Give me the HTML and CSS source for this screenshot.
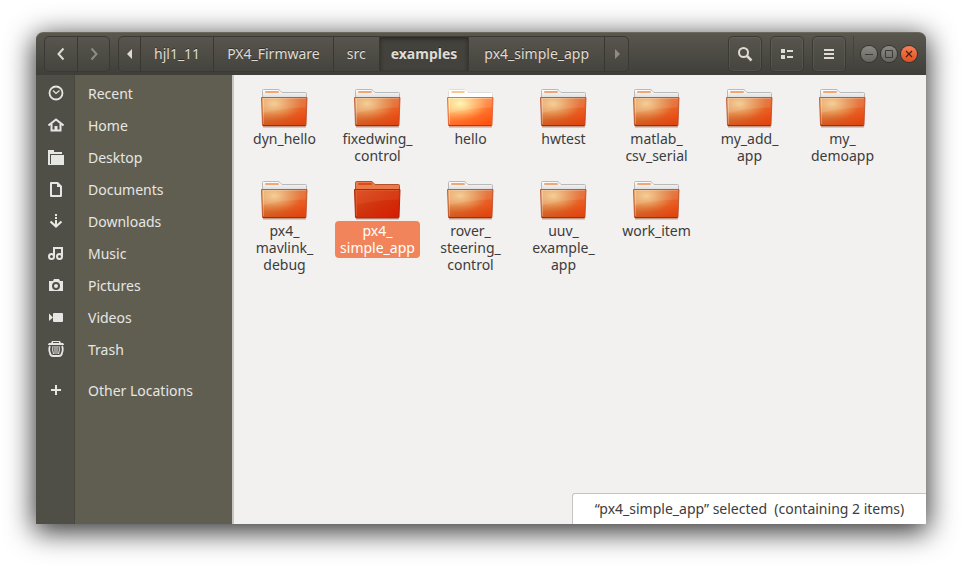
FILE: index.html
```html
<!DOCTYPE html>
<html lang="en">
<head>
    <meta charset="UTF-8">
    <meta name="viewport" content="width=device-width, initial-scale=1.0">
    <title>examples</title>
    <link rel="stylesheet" href="styles.css">
</head>
<body>
    <!-- shared folder drawing -->
    <svg class="defs" width="0" height="0" aria-hidden="true">
        <defs>
            <linearGradient id="front" x1="0" y1="0" x2="1" y2="0.7">
                <stop offset="0" stop-color="#e29a5c"/>
                <stop offset="0.5" stop-color="#de7434"/>
                <stop offset="1" stop-color="#f04e16"/>
            </linearGradient>
            <radialGradient id="glow" cx="0.28" cy="0.22" r="0.6">
                <stop offset="0" stop-color="#f6d294" stop-opacity="0.9"/>
                <stop offset="1" stop-color="#f0b070" stop-opacity="0"/>
            </radialGradient>
            <linearGradient id="shade" x1="0" y1="0" x2="0" y2="1">
                <stop offset="0.5" stop-color="#c83c08" stop-opacity="0"/>
                <stop offset="1" stop-color="#c83c08" stop-opacity="0.5"/>
            </linearGradient>
            <linearGradient id="paper" x1="0" y1="0" x2="0" y2="1">
                <stop offset="0" stop-color="#ffffff"/>
                <stop offset="1" stop-color="#dcdcdc"/>
            </linearGradient>
        </defs>
        <symbol id="folder" viewBox="0 0 47 44">
            <path d="M2 42h43" stroke="#000" stroke-opacity="0.15" stroke-width="2"/>
            <path d="M1.500 13V5.500q0-1 1-1H17q1 0 2 1l2 2h23.500q1 0 1 1V13z" fill="url(#paper)" stroke="#b9b9b9"/>
            <path d="M5 7h12" stroke="#f0a675" stroke-width="2" stroke-linecap="round"/>
            <path d="M0.500 12.500h45.500l-1 27.500q0 1-1 1H2.500q-1 0-1-1z" fill="url(#front)"/>
            <path d="M0.500 12.500h45.500l-1 27.500q0 1-1 1H2.500q-1 0-1-1z" fill="url(#glow)"/>
            <path d="M0.500 12.500h45.500l-1 27.500q0 1-1 1H2.500q-1 0-1-1z" fill="url(#shade)" stroke="#b64a24" stroke-opacity="0.8"/>
            <path d="M1.500 13.500H45l-0.500 9Q22 23 2 28z" fill="#fff" fill-opacity="0.1"/>
            <path d="M1.500 13.500H45M2.500 14v25" fill="none" stroke="#fff" stroke-opacity="0.25"/>
            <path d="M2 40.500h42.500" stroke="#a52a0a"/>
        </symbol>
    </svg>

    <main class="window">
        <header class="titlebar">
            <nav class="group history" aria-label="History">
                <button aria-label="Back"><svg width="16" height="16"><path d="M10.500 2.500L5.500 8l5 5.500" fill="none" stroke="#dfdbd2" stroke-width="2"/></svg></button>
                <button aria-label="Forward" disabled><svg width="16" height="16"><path d="M5.500 2.500l5 5.500-5 5.500" fill="none" stroke="#8f8c85" stroke-width="2"/></svg></button>
            </nav>
            <nav class="group path" aria-label="Path">
                <button class="arrow" aria-label="Scroll left"><svg width="8" height="10"><path d="M6 0v10L1 5z" fill="#dfdbd2"/></svg></button>
                <button>hjl1_11</button>
                <button>PX4_Firmware</button>
                <button>src</button>
                <button class="current">examples</button>
                <button>px4_simple_app</button>
                <button class="arrow" aria-label="Scroll right" disabled><svg width="8" height="10"><path d="M2 0v10l5-5z" fill="#8f8c85"/></svg></button>
            </nav>
            <div class="tools">
                <button aria-label="Search"><svg width="16" height="16"><circle cx="6.500" cy="6.500" r="4.500" fill="none" stroke="#dfdbd2" stroke-width="2"/><path d="M9.500 9.500l5 5" stroke="#dfdbd2" stroke-width="2.500"/></svg></button>
                <button aria-label="View"><svg width="16" height="16"><path d="M2 3h4v4H2zM2 9h4v4H2zM8 4h6v2H8zM8 10h6v2H8z" fill="#dfdbd2"/></svg></button>
                <button aria-label="Menu"><svg width="16" height="16"><path d="M3 3h10v2H3zM3 7h10v2H3zM3 11h10v2H3z" fill="#dfdbd2"/></svg></button>
            </div>
            <div class="controls">
                <button aria-label="Minimize"><svg width="16" height="16"><path d="M4 8.500h8" stroke="#3c3b37"/></svg></button>
                <button aria-label="Maximize"><svg width="16" height="16"><path d="M4.500 4.500h7v7h-7z" fill="none" stroke="#3c3b37"/></svg></button>
                <button class="close" aria-label="Close"><svg width="16" height="16"><path d="M5 5l6 6M11 5l-6 6" stroke="#4a1d0c" stroke-width="1.200"/></svg></button>
            </div>
        </header>

        <div class="content">
            <nav class="sidebar" aria-label="Places">
                <a href="#"><svg width="16" height="16"><circle cx="8" cy="8" r="6.500" fill="none" stroke="#e6e6e4" stroke-width="1.800"/><path d="M5 5.500l3 3 3.500-3" fill="none" stroke="#e6e6e4" stroke-width="1.200"/></svg><span>Recent</span></a>
                <a href="#"><svg width="16" height="16"><path d="M0.500 8.500L8 2.500l7.500 6" fill="none" stroke="#e6e6e4" stroke-width="2"/><path d="M3.500 7v6.500h9V7" fill="none" stroke="#e6e6e4" stroke-width="2"/><path d="M6.500 9h3v5h-3z" fill="#e6e6e4"/></svg><span>Home</span></a>
                <a href="#"><svg width="16" height="16"><path d="M0 1h6v2h8v2H2v11H0z" fill="#e6e6e4"/><path d="M3 6h13v10H3z" fill="#e6e6e4"/><path d="M1 15h3v1H1z" fill="#e6e6e4"/></svg><span>Desktop</span></a>
                <a href="#"><svg width="16" height="16"><path d="M3 2h6.500L13 5.500V15H3z" fill="none" stroke="#e6e6e4" stroke-width="2" stroke-linejoin="round"/><path d="M9 1.500V6h4.500z" fill="#e6e6e4"/></svg><span>Documents</span></a>
                <a href="#"><svg width="16" height="16"><path d="M7 1h2v2H7zM7 4h2v2H7zM7 7h2v6H7z" fill="#e6e6e4"/><path d="M2.500 8.500L8 13.500l5.500-5" fill="none" stroke="#e6e6e4" stroke-width="2.200"/></svg><span>Downloads</span></a>
                <a href="#"><svg width="16" height="16"><circle cx="3.500" cy="11.500" r="2.500" fill="none" stroke="#e6e6e4" stroke-width="2"/><circle cx="11.500" cy="11.500" r="2.500" fill="none" stroke="#e6e6e4" stroke-width="2"/><path d="M6 11.500V3h8v8.500" fill="none" stroke="#e6e6e4" stroke-width="2"/></svg><span>Music</span></a>
                <a href="#"><svg width="16" height="16"><path d="M1 4h4l1-2h5l1 2h3v10H1z" fill="#e6e6e4"/><circle cx="8" cy="9" r="3" fill="#e6e6e4" stroke="#4f4e47" stroke-width="2"/></svg><span>Pictures</span></a>
                <a href="#"><svg width="16" height="16"><path d="M6 4h8q1 0 1 1v7q0 1-1 1H6q-1 0-1-1V5q0-1 1-1z" fill="#e6e6e4"/><path d="M1 4.500v7.500l4-3.500z" fill="#e6e6e4"/></svg><span>Videos</span></a>
                <a href="#"><svg width="16" height="16"><path d="M4 0h8l1 2h2q1 1 1 2H0q0-1 1-2h2z" fill="#e6e6e4"/><path d="M5 1.500h6" stroke="#4f4e47"/><path d="M2 5q-1.500 3 0 7 0.500 3 3 3h6q2.500 0 3-3 1.500-4 0-7" fill="none" stroke="#e6e6e4" stroke-width="1.800"/><path d="M5 5q-1 4 0.500 8M7 5v8M9 5v8M11 5q1 4-0.500 8" fill="none" stroke="#e6e6e4"/></svg><span>Trash</span></a>
                <a class="other" href="#"><svg width="16" height="16"><path d="M3 7h10v2H3zM7 3h2v10H7z" fill="#e6e6e4"/></svg><span>Other Locations</span></a>
            </nav>

            <section class="files" aria-label="Files">
                <a href="#"><svg class="icon"><use href="#folder"/></svg><span>dyn_hello</span></a>
                <a href="#"><svg class="icon"><use href="#folder"/></svg><span>fixedwing_<br>control</span></a>
                <a href="#" class="hover"><svg class="icon"><use href="#folder"/></svg><span>hello</span></a>
                <a href="#"><svg class="icon"><use href="#folder"/></svg><span>hwtest</span></a>
                <a href="#"><svg class="icon"><use href="#folder"/></svg><span>matlab_<br>csv_serial</span></a>
                <a href="#"><svg class="icon"><use href="#folder"/></svg><span>my_add_<br>app</span></a>
                <a href="#"><svg class="icon"><use href="#folder"/></svg><span>my_<br>demoapp</span></a>
                <a href="#"><svg class="icon"><use href="#folder"/></svg><span>px4_<br>mavlink_<br>debug</span></a>
                <a href="#" class="selected">
                    <svg class="icon" viewBox="0 0 47 44">
                        <defs>
                            <linearGradient id="sel" x1="0" y1="0" x2="1" y2="1">
                                <stop offset="0" stop-color="#d94c24"/>
                                <stop offset="0.5" stop-color="#d0330d"/>
                                <stop offset="1" stop-color="#d81a02"/>
                            </linearGradient>
                        </defs>
                        <path d="M2 42h43" stroke="#000" stroke-opacity="0.15" stroke-width="2"/>
                        <path d="M1.500 13V5.500q0-1 1-1H17q1 0 2 1l2 2h23.500q1 0 1 1V13z" fill="#e87a4c" stroke="#b5502a"/>
                        <path d="M5 7h12" stroke="#dc4c18" stroke-width="2" stroke-linecap="round"/>
                        <path d="M0.500 12.500h45.500l-1 27.500q0 1-1 1H2.500q-1 0-1-1z" fill="url(#sel)" stroke="#a82808"/>
                        <path d="M1.500 13.500H45l-0.500 9Q22 23 2 28z" fill="#f07040" fill-opacity="0.2"/>
                        <path d="M1.500 13.500H45M2.500 14v25" fill="none" stroke="#f07040" stroke-opacity="0.4"/>
                    </svg>
                    <span>px4_<br>simple_app</span>
                </a>
                <a href="#"><svg class="icon"><use href="#folder"/></svg><span>rover_<br>steering_<br>control</span></a>
                <a href="#"><svg class="icon"><use href="#folder"/></svg><span>uuv_<br>example_<br>app</span></a>
                <a href="#"><svg class="icon"><use href="#folder"/></svg><span>work_item</span></a>
            </section>

            <div class="status">“px4_simple_app” selected&nbsp; (containing 2 items)</div>
        </div>
    </main>
</body>
</html>
```

FILE: styles.css
```css
* {
    box-sizing: border-box;
}
body {
    display: flex;
    min-height: 100vh;
    margin: 0;
    padding: 32px 38px 42px 36px;
    background-color: #fff;
    font-family: "Noto Sans", sans-serif;
    font-size: 14px;
    color: #3c3c3c;
}
a {
    color: inherit;
    text-decoration: none;
}
button {
    display: flex;
    align-items: center;
    justify-content: center;
    padding: 0;
    border: none;
    background: none;
    color: #dfdbd2;
    font: inherit;
}
svg {
    display: block;
}
.defs {
    position: absolute;
}
.window {
    flex: 1;
    display: flex;
    flex-direction: column;
    border-radius: 7px 7px 0 0;
    box-shadow: 0 6px 28px 2px rgba(0, 0, 0, 0.8);
}

/* title bar */
.titlebar {
    display: flex;
    align-items: center;
    height: 43px;
    padding: 0 9px 0 8px;
    border-radius: 7px 7px 0 0;
    border-top: 1px solid #6b695e;
    background: linear-gradient(#59574e, #3f3e39);
}
.group {
    display: flex;
    height: 36px;
    border: 1px solid #3a3934;
    border-radius: 5px;
    overflow: hidden;
    background: linear-gradient(#57554d, #45443e);
}
.group button + button {
    border-left: 1px solid #383732;
}
.history {
    margin-right: 8px;
}
.history button {
    width: 32px;
}
.path button {
    padding: 0 13px 2px;
    text-shadow: 0 -1px rgba(0, 0, 0, 0.4);
}
.path .arrow {
    width: 21px;
    padding: 0;
}
.path .arrow:last-child {
    width: 24px;
}
.path .current {
    padding: 0 11px 2px;
    background-color: #43423c;
    box-shadow: inset 0 2px 4px rgba(0, 0, 0, 0.4);
    font-weight: bold;
}
.path .current + button {
    padding: 0 15px 2px;
}
.tools {
    display: flex;
    gap: 8px;
    margin-left: auto;
    padding-right: 7px;
    border-right: 1px solid #44433d;
}
.tools button {
    width: 34px;
    height: 36px;
    border: 1px solid #3a3934;
    border-radius: 5px;
    background: linear-gradient(#57554d, #45443e);
    box-shadow: inset 0 0 0 1px rgba(255, 255, 255, 0.06);
}
.controls {
    display: flex;
    gap: 4px;
    margin-left: 7px;
}
.controls button {
    width: 16px;
    height: 16px;
    border-radius: 50%;
    background: linear-gradient(#8c8a84, #66655f);
    box-shadow: 0 0 0 1px #35342f;
}
.controls .close {
    background: linear-gradient(#f58058, #e1501e);
}

/* places */
.content {
    position: relative;
    flex: 1;
    display: flex;
    background-color: #f2f1f0;
}
.sidebar {
    width: 198px;
    padding-top: 2px;
    border-right: 2px solid #c9c6c1;
    background: linear-gradient(to right, #504f47 38px, #47463f 38px, #47463f 39px, #605e51 39px);
    color: #e6e6e4;
}
.sidebar a {
    display: flex;
    align-items: center;
    gap: 24px;
    height: 32px;
    padding-left: 12px;
}
.sidebar .other {
    margin-top: 9px;
}

/* icon view */
.files {
    flex: 1;
    display: grid;
    grid-template-columns: repeat(auto-fill, 93px);
    align-content: start;
    row-gap: 11px;
    padding: 10px 0 0 4px;
}
.files a {
    display: flex;
    flex-direction: column;
    align-items: center;
    height: 81px;
}
.files span {
    padding: 1px 5px 2px;
    border-radius: 4px;
    line-height: 17px;
    text-align: center;
}
.icon {
    width: 47px;
    height: 44px;
    flex-shrink: 0;
}
.hover .icon {
    filter: brightness(1.2);
}
.selected span {
    background-color: #f1845a;
    color: #fff;
}
.status {
    position: absolute;
    right: 0;
    bottom: 0;
    min-width: 354px;
    height: 31px;
    padding: 0 19px;
    border: 1px solid #c6c4c1;
    border-width: 1px 0 0 1px;
    border-radius: 3px 0 0 0;
    background-color: #fff;
    line-height: 30px;
    text-align: center;
}
```
